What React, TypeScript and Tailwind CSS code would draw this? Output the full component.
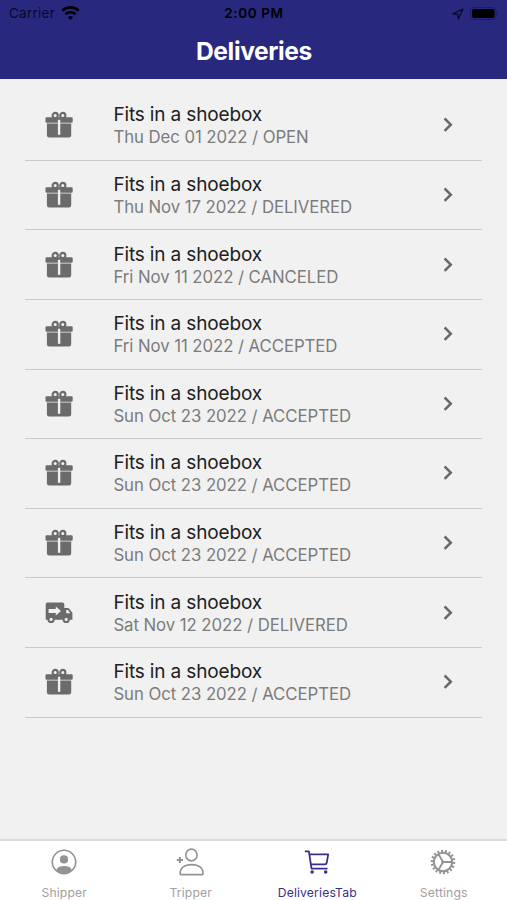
type Delivery = { date: string; status: string; shipped?: boolean };

const deliveries: Delivery[] = [
  { date: "Thu Dec 01 2022", status: "OPEN" },
  { date: "Thu Nov 17 2022", status: "DELIVERED" },
  { date: "Fri Nov 11 2022", status: "CANCELED" },
  { date: "Fri Nov 11 2022", status: "ACCEPTED" },
  { date: "Sun Oct 23 2022", status: "ACCEPTED" },
  { date: "Sun Oct 23 2022", status: "ACCEPTED" },
  { date: "Sun Oct 23 2022", status: "ACCEPTED" },
  { date: "Sat Nov 12 2022", status: "DELIVERED", shipped: true },
  { date: "Sun Oct 23 2022", status: "ACCEPTED" },
];

const GiftIcon = () => (
  <svg width="30" height="30" viewBox="0 0 30 30" fill="#6b6b6b">
    <g fill="none" stroke="#6b6b6b" strokeWidth="2.1">
      <circle cx="11.2" cy="5.5" r="2.6" />
      <circle cx="18.8" cy="5.5" r="2.6" />
    </g>
    <rect x="1.5" y="7.3" width="27.2" height="5.4" rx="1.2" />
    <path d="M2.9 13.5h24.3v11.7a2.2 2.2 0 0 1-2.2 2.2H5.1a2.2 2.2 0 0 1-2.2-2.2z" />
    <path d="M13.9 9.8h2.4v15h-2.4z" fill="#f1f1f1" />
  </svg>
);

const TruckIcon = () => (
  <svg width="30" height="30" viewBox="0 0 30 30" fill="#6b6b6b">
    <path d="M3.4 4.6h15.2a1.7 1.7 0 0 1 1.7 1.7v3.7h3.5c.6 0 1 .2 1.4.7l2.8 3.6c.3.4.4.7.4 1.2v6.2H1.7V6.3a1.7 1.7 0 0 1 1.7-1.7z" />
    <path d="M22.2 11.9H24l2.4 3.3h-4.2z" fill="#f1f1f1" />
    <path d="M4.6 11.1h7.2V8.5l5.2 4.6-5.2 4.5V15H4.6z" fill="#f1f1f1" />
    <g fill="#f1f1f1" stroke="#6b6b6b" strokeWidth="2">
      <circle cx="7.1" cy="21.4" r="2.6" />
      <circle cx="22.2" cy="21.4" r="2.6" />
    </g>
  </svg>
);

const ContactIcon = () => (
  <svg width="26" height="26" viewBox="0 0 26 26" fill="currentColor">
    <circle cx="13" cy="13" r="11.7" fill="none" stroke="currentColor" strokeWidth="1.6" />
    <circle cx="13" cy="10.4" r="4.1" />
    <path d="M5.1 21.2c.9-2.7 4.1-4.1 7.9-4.1s7 1.4 7.9 4.1A11.6 11.6 0 0 1 13 24.6a11.6 11.6 0 0 1-7.9-3.4z" />
  </svg>
);

const PersonAddIcon = () => (
  <svg width="30" height="30" viewBox="0 0 30 30" fill="none" stroke="currentColor" strokeWidth="1.6">
    <ellipse cx="16.4" cy="8" rx="5.7" ry="5.9" />
    <path d="M5.2 27c-.3-6.2 4.4-9.4 11.4-9.4s11.7 3.2 11.4 9.4c0 .4-.3.6-.7.6H5.9c-.4 0-.7-.2-.7-.6z" />
    <path d="M4.9 9.9v6.2M1.8 13h6.2" strokeWidth="2" />
  </svg>
);

const CartIcon = () => (
  <svg width="28" height="28" viewBox="0 0 28 28" fill="none" stroke="currentColor" strokeWidth="1.8" strokeLinejoin="round">
    <path d="M1.8 3.4h4.1l2.6 17.2h16" />
    <path d="M6.4 6.3h18.8l-1.5 8.5c-.2 1-.7 1.5-1.7 1.5H8" />
    <circle cx="9.1" cy="24" r="1.8" fill="currentColor" stroke="none" />
    <circle cx="22.7" cy="24" r="1.8" fill="currentColor" stroke="none" />
  </svg>
);

const CogIcon = () => (
  <svg width="28" height="28" viewBox="0 0 28 28" fill="none" stroke="currentColor">
    <circle cx="14" cy="14" r="9.2" strokeWidth="2.1" />
    {/* teeth: 18 dashes spread over the outer ring */}
    <circle cx="14" cy="14" r="11.1" strokeWidth="2.4" pathLength="36" strokeDasharray="1 1" />
    <path d="M14 14h9.2M14 14 9.4 6M14 14 9.4 22" strokeWidth="1.8" />
    <circle cx="13.8" cy="14" r="1.5" fill="currentColor" stroke="none" />
  </svg>
);

const StatusBar = () => (
  <div className="grid grid-cols-3 items-center h-[27px] pl-[9px] pr-[8px] text-[13.5px] leading-none text-[#08082a]">
    <div className="flex items-center gap-[6px]">
      <span className="tracking-[0.25px]">Carrier</span>
      <svg width="19" height="15" viewBox="0 0 19 15" fill="none" stroke="#000" strokeWidth="2.6">
        <path d="M1.3 4.7a11.8 11.8 0 0 1 16.4 0" />
        <path d="M4.4 8.3a7.4 7.4 0 0 1 10.2 0" />
        <path d="M9.5 14.1 6.9 11.3a3.8 3.8 0 0 1 5.2 0z" fill="#000" stroke="none" />
      </svg>
    </div>
    <span className="text-center font-semibold tracking-[0.6px] text-black">2:00 PM</span>
    <div className="flex items-center justify-end gap-[6px]">
      <svg width="12" height="12" viewBox="0 0 12 12" fill="none" stroke="#060622" strokeWidth="1.2">
        <path d="M11 1 1 5.8l4.8.4.5 4.8z" strokeLinejoin="round" />
      </svg>
      <svg width="29" height="13" viewBox="0 0 29 13">
        <rect x=".5" y=".5" width="25.5" height="12" rx="3.5" fill="none" stroke="#1b1b62" />
        <rect x="2" y="2" width="22.5" height="9" rx="2" />
        <path d="M27.3 4.3q1.5 2.2 0 4.4z" fill="#1b1b62" />
      </svg>
    </div>
  </div>
);

const DeliveryRow = ({ date, status, shipped }: Delivery) => (
  <li className="flex items-center h-[69.6px] pl-[19px] pr-[28px] border-b border-[#cacaca]">
    {shipped ? <TruckIcon /> : <GiftIcon />}
    <div className="ml-[39.4px] pt-[2px] flex-1 whitespace-nowrap">
      <p className="text-[19px] leading-[22px] tracking-[-0.15px] text-[#202020]">Fits in a shoebox</p>
      <p className="text-[16.8px] leading-[22px] tracking-[-0.07px] text-[#7c7c7c]">{date} / {status}</p>
    </div>
    <svg width="12" height="16" viewBox="0 0 12 16" fill="none" stroke="#686868" strokeWidth="2.5">
      <path d="m2.6 1.5 6.2 6.2-6.2 6.2" />
    </svg>
  </li>
);

const tabs = [
  { label: "Shipper", icon: <ContactIcon /> },
  { label: "Tripper", icon: <PersonAddIcon /> },
  { label: "DeliveriesTab", icon: <CartIcon />, active: true },
  { label: "Settings", icon: <CogIcon /> },
];

export default function App() {
  return (
    <div className="flex flex-col w-[507px] h-[900px] overflow-hidden bg-[#f1f1f1] font-[Inter,sans-serif]">
      <header className="h-[79px] bg-[#28287f]">
        <StatusBar />
        <h1 className="pl-px text-center text-[24.6px] leading-[48px] font-bold tracking-[-0.4px] text-white">Deliveries</h1>
      </header>

      <ul className="flex-1 pt-[12.2px] mx-[25px]">
        {deliveries.map((item, i) => <DeliveryRow key={i} {...item} />)}
      </ul>

      <nav className="grid grid-cols-4 h-[61px] pl-px bg-white border-t-2 border-[#dadada]">
        {tabs.map((tab) => (
          <button key={tab.label} className={`flex flex-col items-center ${tab.active ? "text-[#38308b]" : "text-[#939393]"}`}>
            <span className="flex items-center justify-center h-[42px] pr-px">{tab.icon}</span>
            <span className={`pt-px text-[12.2px] leading-[17px] tracking-[0.15px] ${tab.active ? "" : "text-[#a0a0a0]"}`}>{tab.label}</span>
          </button>
        ))}
      </nav>
    </div>
  );
}
